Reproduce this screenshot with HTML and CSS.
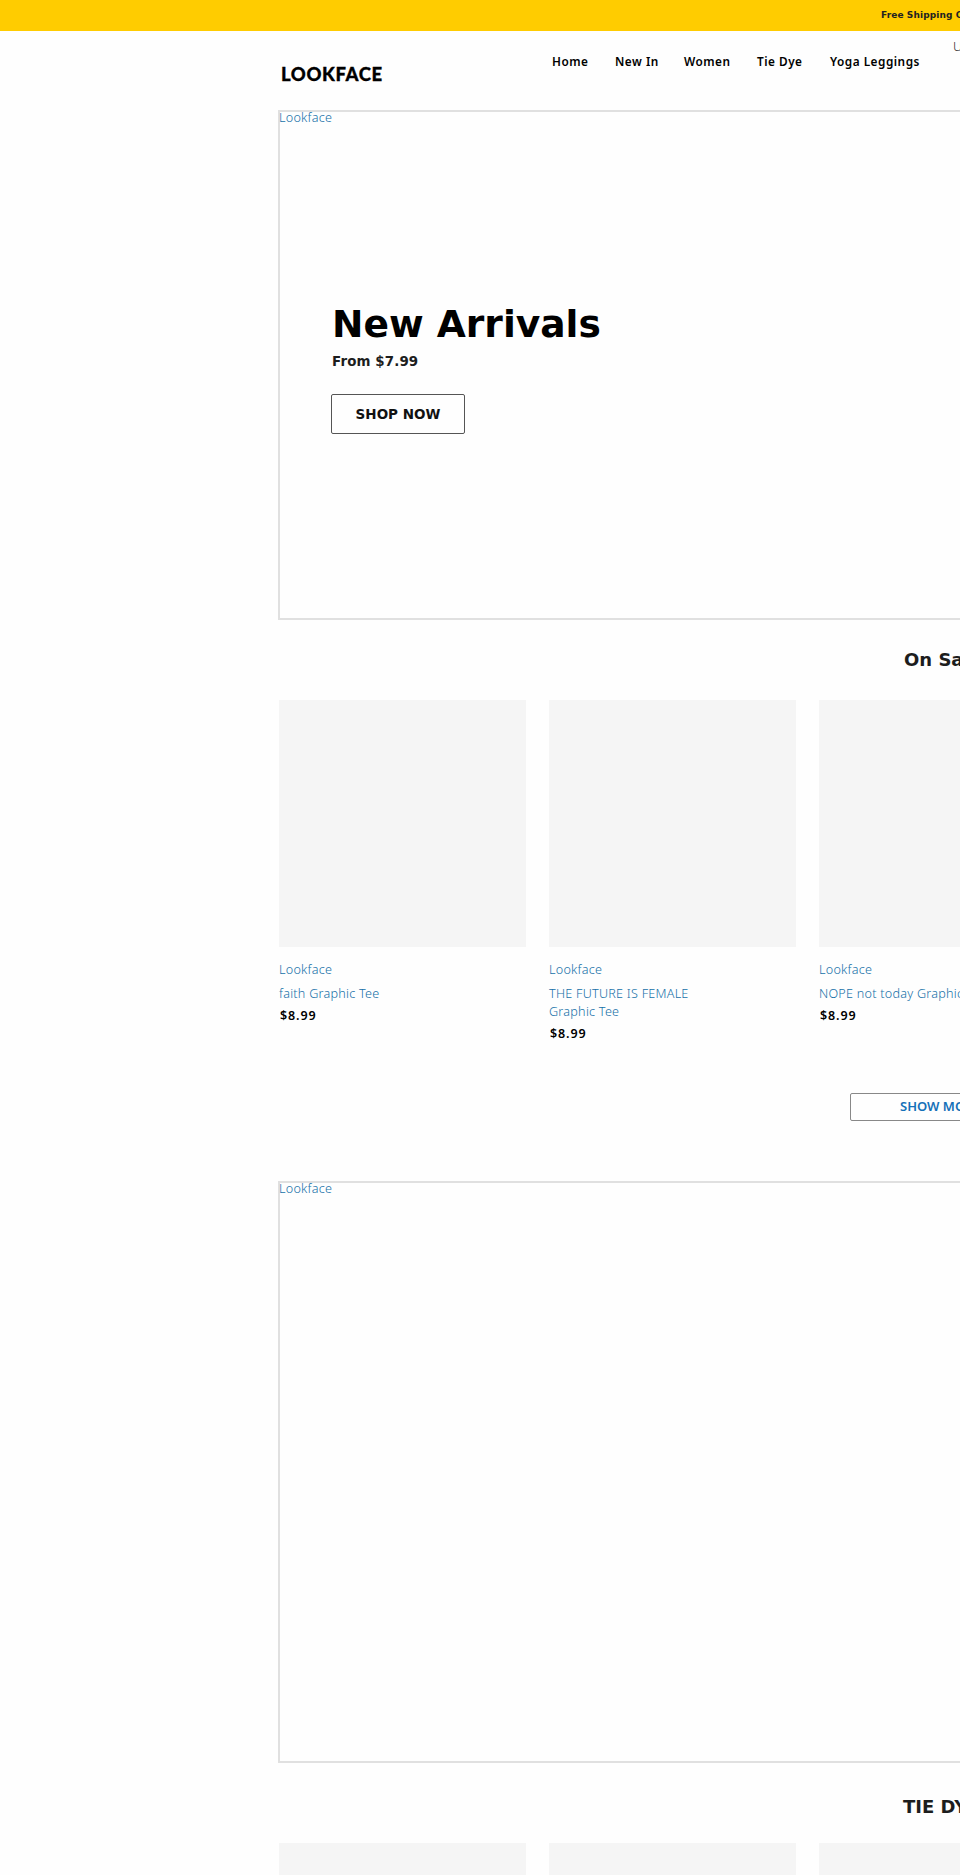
FILE: index.html
```html
<!DOCTYPE html>
<html lang="en">
<head>
<meta charset="utf-8">
<title>Lookface</title>
<link rel="stylesheet" href="styles.css">
</head>
<body>
<div class="page">
  <div class="promo"><span class="promo-text">Free Shipping On</span></div>
  <div class="container">
    <header class="header">
      <div class="logo">LOOKFACE</div>
      <nav class="nav">
        <a class="n-home">Home</a><a class="n-new">New In</a><a class="n-women">Women</a><a class="n-tie">Tie Dye</a><a class="n-yoga">Yoga Leggings</a>
      </nav>
      <span class="currency">USD</span>
    </header>
    <section class="banner hero">
      <span class="link">Lookface</span>
      <div class="hero-copy">
        <h1 class="hero-title">New Arrivals</h1>
        <p class="hero-sub">From $7.99</p>
        <a class="shop">SHOP NOW</a>
      </div>
    </section>
    <h2 class="title sale-title">On Sale</h2>
    <div class="grid">
      <article class="card"><div class="thumb"></div><div class="link vendor">Lookface</div><div class="link name">faith Graphic Tee</div><div class="price">$8.99</div></article>
      <article class="card"><div class="thumb"></div><div class="link vendor">Lookface</div><div class="link name">THE FUTURE IS FEMALE<br>Graphic Tee</div><div class="price">$8.99</div></article>
      <article class="card"><div class="thumb"></div><div class="link vendor">Lookface</div><div class="link name">NOPE not today Graphic Tee</div><div class="price">$8.99</div></article>
    </div>
    <a class="more">SHOW MORE</a>
    <section class="banner feature"><span class="link">Lookface</span></section>
    <h2 class="title tie-title">TIE DYE</h2>
    <div class="grid">
      <div class="thumb"></div><div class="thumb"></div><div class="thumb"></div>
    </div>
  </div>
</div>
</body>
</html>
```
FILE: styles.css
```css
* { box-sizing: border-box; }
body { margin: 0; background: #fff; color: #1c1d1d; font-family: "DejaVu Sans", sans-serif; }
.page { width: 960px; height: 1875px; overflow: hidden; background: #fefefe; }
.promo { height: 31px; background: #fc0; padding-left: 881px; overflow: hidden; white-space: nowrap; }
.promo-text { display: block; font-size: 9px; font-weight: 700; line-height: 30px; color: #222; letter-spacing: .1px; }
.container { width: 1362px; margin-left: 279px; }
.header { height: 79px; display: flex; align-items: flex-start; white-space: nowrap; }
.logo { width: 273px; padding: 33px 0 0 2px; font-family: "Lato", sans-serif; font-weight: 900; font-size: 18.5px; line-height: 20px; color: #000; letter-spacing: .6px; -webkit-text-stroke: .3px #000; }
.nav { display: flex; padding-top: 22px; font-family: "Noto Sans", sans-serif; font-size: 11.8px; font-weight: 600; line-height: 16px; color: #000; letter-spacing: .5px; }
.n-home { width: 63px; }
.n-new { width: 69px; }
.n-women { width: 73px; }
.n-tie { width: 73px; }
.n-yoga { width: 123px; }
.currency { font-family: "Noto Sans", sans-serif; font-size: 13px; font-weight: 300; line-height: 16px; padding-top: 7px; color: #333; }
.banner { border: 2px solid #e0e0e0; margin-left: -1px; }
.hero { height: 510px; }
.link { display: block; font-family: "Noto Sans", sans-serif; font-size: 12.6px; font-weight: 300; line-height: 18px; letter-spacing: .25px; color: #1570a8; }
.banner .link { margin: -3px 0 0 -1px; }
.hero-copy { padding: 174px 0 0 52px; }
.hero-title { margin: 0; font-size: 37.6px; line-height: 46px; color: #000; }
.hero-sub { margin: 5px 0 0; font-size: 13.4px; line-height: 20px; font-weight: 700; letter-spacing: .12px; }
.shop { display: flex; width: 134px; height: 40px; margin: 22px 0 0 -1px; border: 1px solid #555; border-radius: 2px; align-items: center; justify-content: center; font-size: 13.5px; font-weight: 700; color: #111; }
.title { margin: 0; height: 80px; font-size: 18px; font-weight: 700; line-height: 80px; white-space: nowrap; }
.sale-title { padding-left: 625px; }
.tie-title { padding: 4px 0 0 624px; }
.grid { display: grid; grid-template-columns: repeat(3, 247px); column-gap: 23px; }
.thumb { height: 247px; background: #f5f5f5; }
.vendor { margin-top: 14px; }
.name { margin-top: 6px; white-space: nowrap; }
.price { margin: 4px 0 0 1px; font-family: "Noto Sans", sans-serif; font-size: 12.5px; line-height: 18px; font-weight: 600; letter-spacing: .9px; color: #000; }
.more { display: flex; width: 220px; height: 28px; margin: 50px 0 60px 571px; padding: 0 0 2px 49px; border: 1px solid #888; border-radius: 2px; align-items: center; font-family: "Noto Sans", sans-serif; font-size: 13px; font-weight: 600; color: #1470b8; }
.feature { height: 582px; }
```
